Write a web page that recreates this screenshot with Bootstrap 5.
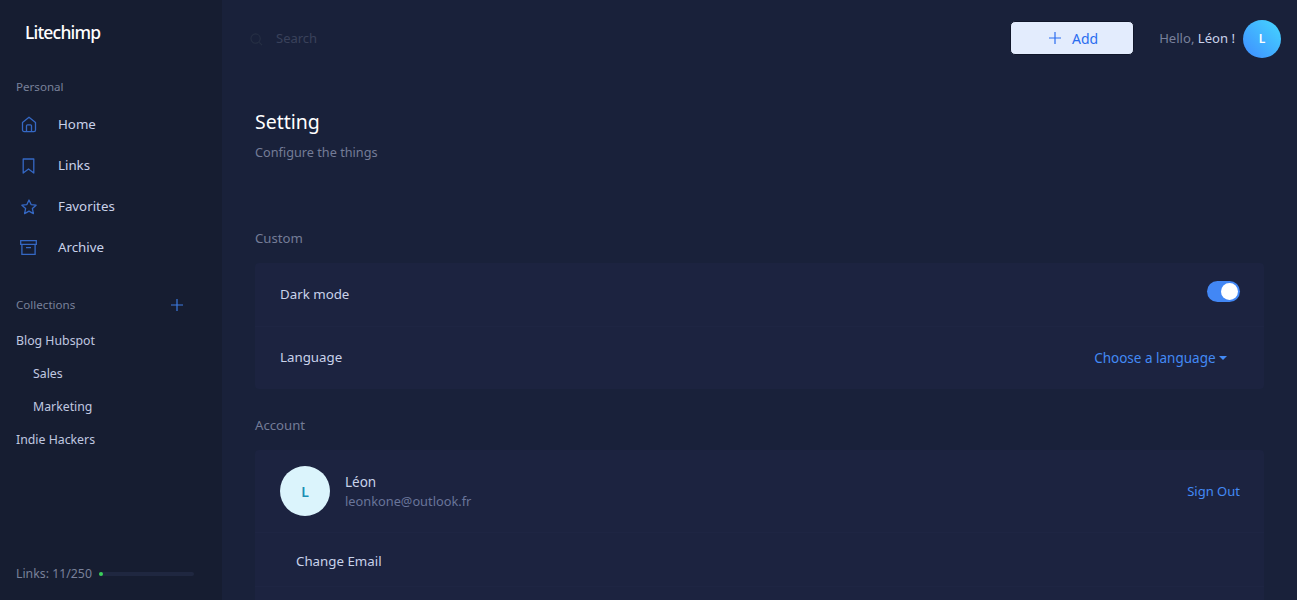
<!DOCTYPE html>
<html lang="en">
  <head>
    <meta charset="UTF-8" />
    <meta name="viewport" content="width=device-width, initial-scale=1.0" />
    <title>Litechimp</title>
    <link href="https://cdn.jsdelivr.net/npm/bootstrap@5.3.3/dist/css/bootstrap.min.css" rel="stylesheet" />
    <style>
      body {
        font-family: "Noto Sans", "Open Sans", sans-serif;
        font-size: 13.3px;
        background: #19213a;
        color: #c9d2ea;
        height: 600px;
        overflow: hidden;
      }
      .side-bar {
        width: 222px;
        height: 600px;
        background: #161d31;
        padding: 0 25px 0 16px;
      }
      .brand-name {
        height: 64px;
        padding-left: 9px;
        color: #fff;
        font-size: 17.5px;
        font-weight: 500;
        letter-spacing: -0.8px;
      }
      .side-label {
        height: 20px;
        line-height: 20px;
        color: #79819a;
        font-size: 11.6px;
        white-space: nowrap;
      }
      .personal-label {
        margin: 13px 0 7px;
      }
      .menu-link {
        height: 41px;
        color: #c9d2ea;
      }
      .menu-icon {
        width: 25px;
        margin-right: 17px;
        color: #3568c4;
      }
      .coll-head {
        margin: 27px 14px 10px 0;
      }
      .coll-link {
        height: 33px;
        color: #c0c8e0;
        font-size: 12.3px;
      }
      .coll-sub {
        padding-left: 17px;
      }
      .usage-row {
        margin: auto 0 16px;
        gap: 7px;
      }
      .usage-row .side-label {
        font-size: 12.3px;
      }
      .usage-track {
        width: 95px;
        height: 4px;
        background: #1f2740;
        border-radius: 2px;
      }
      .usage-fill {
        background: #3ad15a;
        border-radius: 2px;
      }
      .main-area {
        min-width: 0;
        padding: 0 33px;
      }
      .top-bar {
        height: 78px;
        margin-right: -17px;
      }
      .search-box {
        margin-left: -5px;
        color: #39415a;
        font-size: 13px;
        gap: 13px;
      }
      .add-btn {
        width: 124px;
        height: 34px;
        padding: 0 0 0 3px;
        margin-top: -2px;
        background: #e3ecfd;
        color: #2a6cf0;
        border: 1px solid #10162a;
        border-radius: 5px;
        font-size: 14px;
        gap: 11px;
      }
      .add-btn:hover {
        background: #e3ecfd;
        color: #2a6cf0;
      }
      .hello-text {
        margin-left: 25px;
        color: #78809b;
        font-size: 13.1px;
      }
      .hello-text span {
        color: #c9d2ea;
      }
      .user-dot {
        width: 38px;
        height: 38px;
        margin-left: 8px;
        background: linear-gradient(45deg, #3f8cff, #45d7ff);
        color: #fff;
        font-size: 12px;
        font-weight: 600;
      }
      .page-title {
        margin: 32px 0 0;
        color: #fff;
        font-size: 19.5px;
        font-weight: 400;
      }
      .page-sub {
        margin: 10px 0 66px;
        color: #747c97;
        font-size: 12.7px;
      }
      .section-name {
        height: 20px;
        line-height: 20px;
        margin-bottom: 15px;
        color: #747c97;
        font-size: 13.2px;
      }
      .panel-box {
        background: #1c2340;
        border-radius: 4px;
      }
      .custom-box {
        margin-bottom: 26px;
      }
      .panel-row {
        height: 63px;
        padding: 0 24px 0 25px;
      }
      .panel-row + .panel-row {
        border-top: 1px solid #1e2543;
      }
      .toggle-pill {
        width: 33px;
        height: 21px;
        margin-bottom: 6px;
        padding: 2px;
        background: #4287f5;
        border-radius: 11px;
      }
      .toggle-knob {
        width: 17px;
        height: 17px;
        background: #fff;
        border-radius: 50%;
      }
      .blue-link {
        color: #438af5;
        font-size: 13.5px;
        text-decoration: none;
      }
      .lang-link {
        margin-right: 13px;
      }
      .signout-link {
        font-size: 13px;
      }
      .account-row {
        height: 82px;
      }
      .account-dot {
        width: 50px;
        height: 50px;
        margin-right: 15px;
        background: #dbf4fc;
        color: #1a8fb5;
        font-weight: 600;
        font-size: 14px;
      }
      .account-name {
        font-size: 13.5px;
      }
      .account-mail {
        color: #69759a;
        font-size: 12.8px;
      }
      .email-row {
        height: 54px;
        padding-top: 4px;
      }
    </style>
  </head>
  <body>
    <div class="d-flex">
      <aside class="side-bar d-flex flex-column flex-shrink-0">
        <div class="brand-name d-flex align-items-center">Litechimp</div>
        <div class="side-label personal-label">Personal</div>
        <a class="menu-link d-flex align-items-center text-decoration-none" href="#">
          <span class="menu-icon d-flex justify-content-center">
            <svg width="16" height="17" viewBox="0 0 16 17" fill="none" stroke="currentColor" stroke-width="1.3" stroke-linejoin="round"><path d="M1.5 6.5 8 1.2l6.5 5.3V14a1.6 1.6 0 0 1-1.6 1.6H3.1A1.6 1.6 0 0 1 1.5 14z"/><path d="M5.5 15.6V9.8a1 1 0 0 1 1-1h3a1 1 0 0 1 1 1v5.8"/></svg>
          </span>Home</a>
        <a class="menu-link d-flex align-items-center text-decoration-none" href="#">
          <span class="menu-icon d-flex justify-content-center">
            <svg width="13" height="16" viewBox="0 0 13 16" fill="none" stroke="currentColor" stroke-width="1.3" stroke-linejoin="round"><path d="M1.2 1h10.6v14L6.5 11l-5.3 4z"/></svg>
          </span>Links</a>
        <a class="menu-link d-flex align-items-center text-decoration-none" href="#">
          <span class="menu-icon d-flex justify-content-center">
            <svg width="16" height="16" viewBox="0 0 16 16" fill="none" stroke="currentColor" stroke-width="1.3" stroke-linejoin="round"><path d="m8 1 2.1 4.6 5 .6-3.7 3.4 1 5L8 12.1l-4.4 2.5 1-5L.9 6.2l5-.6z"/></svg>
          </span>Favorites</a>
        <a class="menu-link d-flex align-items-center text-decoration-none" href="#">
          <span class="menu-icon d-flex justify-content-center">
            <svg width="17" height="15" viewBox="0 0 17 15" fill="none" stroke="currentColor" stroke-width="1.3"><path d="M.7.7h15.6v3.6H.7zM1.9 4.3v10h13.2v-10M6 7.6h5"/></svg>
          </span>Archive</a>
        <div class="coll-head d-flex align-items-center justify-content-between">
          <span class="side-label">Collections</span>
          <svg width="12" height="12" viewBox="0 0 12 12" fill="none" stroke="#3d7be0" stroke-width="1.2"><path d="M6 0v12M0 6h12"/></svg>
        </div>
        <a class="coll-link d-flex align-items-center text-decoration-none" href="#">Blog Hubspot</a>
        <a class="coll-link coll-sub d-flex align-items-center text-decoration-none" href="#">Sales</a>
        <a class="coll-link coll-sub d-flex align-items-center text-decoration-none" href="#">Marketing</a>
        <a class="coll-link d-flex align-items-center text-decoration-none" href="#">Indie Hackers</a>
        <div class="usage-row d-flex align-items-center">
          <span class="side-label">Links: 11/250</span>
          <div class="usage-track d-flex"><div class="usage-fill" style="width: 4.4%"></div></div>
        </div>
      </aside>
      <main class="main-area flex-grow-1">
        <header class="top-bar d-flex align-items-center">
          <div class="search-box d-flex align-items-center">
            <svg width="13" height="13" viewBox="0 0 14 14" fill="none" stroke="#262f44" stroke-width="1.2"><circle cx="6" cy="6" r="5"/><path d="m10 10 3 3"/></svg>
            <span>Search</span>
          </div>
          <button class="btn add-btn d-flex align-items-center justify-content-center ms-auto" type="button">
            <svg width="12" height="12" viewBox="0 0 12 12" fill="none" stroke="currentColor" stroke-width="1.2"><path d="M6 0v12M0 6h12"/></svg>
            <span>Add</span>
          </button>
          <div class="hello-text">Hello, <span>Léon !</span></div>
          <div class="user-dot rounded-circle d-flex align-items-center justify-content-center">L</div>
        </header>
        <h1 class="page-title">Setting</h1>
        <p class="page-sub">Configure the things</p>
        <div class="section-name">Custom</div>
        <section class="panel-box custom-box">
          <div class="panel-row d-flex align-items-center justify-content-between">
            <span>Dark mode</span>
            <div class="toggle-pill d-flex justify-content-end"><div class="toggle-knob"></div></div>
          </div>
          <div class="panel-row d-flex align-items-center justify-content-between">
            <span>Language</span>
            <a class="blue-link lang-link dropdown-toggle" href="#">Choose a language</a>
          </div>
        </section>
        <div class="section-name">Account</div>
        <section class="panel-box">
          <div class="panel-row account-row d-flex align-items-center">
            <div class="account-dot rounded-circle d-flex align-items-center justify-content-center">L</div>
            <div>
              <div class="account-name">Léon</div>
              <div class="account-mail">leonkone@outlook.fr</div>
            </div>
            <a class="blue-link signout-link ms-auto" href="#">Sign Out</a>
          </div>
          <div class="panel-row email-row d-flex align-items-center">
            <span class="ms-3">Change Email</span>
          </div>
          <div class="panel-row"></div>
        </section>
      </main>
    </div>
    <script src="https://cdn.jsdelivr.net/npm/bootstrap@5.3.3/dist/js/bootstrap.bundle.min.js"></script>
  </body>
</html>
